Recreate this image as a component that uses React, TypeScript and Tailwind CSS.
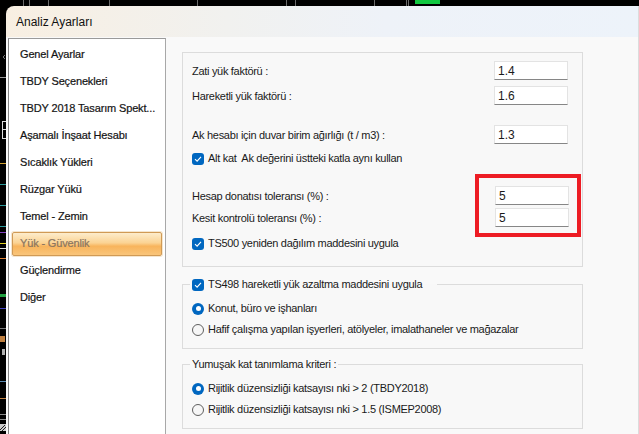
import React from "react";

const FONT = { fontFamily: '"Liberation Sans", Arial, sans-serif' };

function CheckBox() {
  return (
    <span className="w-[12px] h-[12px] rounded-[3px] bg-[#0067c0] flex items-center justify-center shrink-0">
      <svg width="8" height="8" viewBox="0 0 8 8">
        <path d="M1 4.2 L3.1 6.2 L7 1.8" fill="none" stroke="#ffffff" strokeWidth="1.1" />
      </svg>
    </span>
  );
}

function Radio({ checked }: { checked?: boolean }) {
  return checked ? (
    <span className="w-[12px] h-[12px] rounded-full bg-[#0067c0] flex items-center justify-center shrink-0">
      <span className="w-[5px] h-[5px] rounded-full bg-white" />
    </span>
  ) : (
    <span className="w-[12px] h-[12px] rounded-full border border-[#5f5f5f] bg-[#f6f6f6] shrink-0" />
  );
}

function Input({ value, wide }: { value: string; wide?: boolean }) {
  return (
    <div
      className={
        "h-[19px] w-[74px] bg-white border border-[#e3e3e3] border-b-[#868686] flex items-center pl-[3px] text-[12px] tracking-normal text-[#1a1a1a] " +
        (wide ? "mr-[13px]" : "mr-[14px]")
      }
    >
      {value}
    </div>
  );
}

function Row({ label, value, mt, wide }: { label: string; value: string; mt: string; wide?: boolean }) {
  return (
    <div className={"h-[19px] flex items-center justify-between " + mt}>
      <span className="pt-[2px]">{label}</span>
      <Input value={value} wide={wide} />
    </div>
  );
}

const items = [
  "Genel Ayarlar",
  "TBDY Seçenekleri",
  "TBDY 2018 Tasarım Spekt...",
  "Aşamalı İnşaat Hesabı",
  "Sıcaklık Yükleri",
  "Rüzgar Yükü",
  "Temel - Zemin",
  "Yük - Güvenlik",
  "Güçlendirme",
  "Diğer",
];

export default function App() {
  return (
    <div className="w-[639px] h-[434px] bg-black overflow-hidden flex flex-col text-[11px] text-[#1a1a1a]" style={FONT}>
      <svg width="639" height="6" className="block shrink-0">
        <rect width="639" height="6" fill="#000" />
        {[23, 29, 48, 109, 197, 286, 295, 374, 406, 408].map((x) => (
          <line key={x} x1={x + 0.5} y1="0" x2={x + 0.5} y2="6" stroke="#6a6a6a" strokeWidth="1" />
        ))}
        <rect x="415" y="0" width="25" height="4" fill="#12c840" />
      </svg>
      <div className="flex flex-1 min-h-0">
        <svg width="6" height="428" className="block shrink-0">
          <rect width="6" height="428" fill="#000" />
          <path d="M5 49 L3 51 L5 53" stroke="#777" fill="none" />
          <line x1="0" y1="71.5" x2="6" y2="71.5" stroke="#9a9a9a" />
          <rect x="2" y="115" width="4" height="1" fill="#ddd" />
          <rect x="2" y="115" width="1" height="18" fill="#ddd" />
          <rect x="2" y="123" width="4" height="1" fill="#ddd" />
          <rect x="2" y="132" width="4" height="1" fill="#ddd" />
          <line x1="0" y1="157.5" x2="6" y2="157.5" stroke="#d0a030" />
          <line x1="0" y1="178.5" x2="6" y2="178.5" stroke="#2a9a9a" />
          <line x1="0" y1="199.5" x2="6" y2="199.5" stroke="#2a9a9a" />
          <line x1="0" y1="220.5" x2="6" y2="220.5" stroke="#2a9a9a" />
          <line x1="0" y1="226.5" x2="6" y2="226.5" stroke="#8040c0" />
          <line x1="0" y1="237.5" x2="6" y2="237.5" stroke="#e0d020" />
          <line x1="0" y1="242.5" x2="6" y2="242.5" stroke="#e0e0e0" />
          <line x1="0" y1="252.5" x2="6" y2="252.5" stroke="#e08030" />
          <rect x="0" y="288" width="6" height="3" fill="#20a040" />
          <line x1="0" y1="302.5" x2="6" y2="302.5" stroke="#4040c0" />
          <line x1="0" y1="322.5" x2="6" y2="322.5" stroke="#777" />
          <rect x="0" y="330" width="5" height="6" fill="#c08040" />
          <rect x="2" y="343" width="3" height="6" fill="#b0b0b0" />
          <line x1="0" y1="375.5" x2="6" y2="375.5" stroke="#5a8ab0" />
          <line x1="0" y1="392.5" x2="6" y2="392.5" stroke="#c08040" />
          <line x1="0" y1="408.5" x2="6" y2="408.5" stroke="#888" />
          <line x1="0" y1="413.5" x2="6" y2="413.5" stroke="#888" />
          <rect x="0" y="418" width="6" height="7" fill="#ccc" />
          <path d="M0 424 L5 419 M2 425 L6 421" stroke="#222" />
        </svg>

        {/* Window */}
        <div className="flex-1 flex flex-col rounded-tl-[8px] overflow-hidden border-r border-[#dcdcdc]">
          <div className="h-[31px] shrink-0 flex items-center pl-[10px] text-[12px] text-[#111] bg-[linear-gradient(to_right,#f8efe2,#f1f1ef_35%,#eef2f8_60%,#edf3fa)]">
            Analiz Ayarları
          </div>
          <div className="flex-1 flex bg-[#f9f9f9] min-h-0">
            {/* Left list */}
            <div className="ml-[2px] mt-[1px] w-[158px] bg-white border-l border-t border-r border-l-[#858585] border-t-[#9a9a9a] border-r-[#a8a8a8] pt-[2px] px-[3px] tracking-[-0.15px] [-webkit-text-stroke:0.2px]">
              {items.map((t) => {
                const sel = t === "Yük - Güvenlik";
                return (
                  <div key={t} className="h-[27px] flex items-center">
                    <div
                      className={
                        "h-[24px] w-full flex items-center pl-[7px] whitespace-nowrap " +
                        (sel
                          ? "border border-[#d09a55] rounded-[2px] text-[#8a7560] bg-[linear-gradient(to_bottom,#fdeccc,#fbd393_45%,#f8b45c_60%,#f9c57a)] shadow-[0_0_0_1px_#f5e6cf]"
                          : "border border-transparent text-[#141414]")
                      }
                    >
                      {t}
                    </div>
                  </div>
                );
              })}
            </div>

            {/* Right content */}
            <div className="flex-1 pl-[16px] pt-[15px] flex flex-col tracking-[-0.3px]">
              <div className="relative w-[401px] border border-[#dcdcdc] bg-[#f8f8f8] pl-[9px] pt-[8px] pb-[13px] flex flex-col">
                <Row label="Zati yük faktörü :" value="1.4" mt="" />
                <Row label="Hareketli yük faktörü :" value="1.6" mt="mt-[6px]" />
                <Row label="Ak hesabı için duvar birim ağırlığı (t / m3) :" value="1.3" mt="mt-[20px]" />
                <div className="h-[19px] mt-[5px] flex items-center gap-[4px]">
                  <CheckBox />
                  <span>Alt kat&nbsp; Ak değerini üstteki katla aynı kullan</span>
                </div>
                <Row label="Hesap donatısı toleransı (%) :" value="5" mt="mt-[18px]" wide />
                <Row label="Kesit kontrolü toleransı (%) :" value="5" mt="mt-[3px]" wide />
                <div className="h-[19px] mt-[7px] flex items-center gap-[4px]">
                  <CheckBox />
                  <span>TS500 yeniden dağılım maddesini uygula</span>
                </div>
                <div className="absolute left-[292px] top-[121px] w-[106px] h-[63px] border-[4px] border-[#ed1c24]" />
              </div>

              <fieldset className="mt-[8px] w-[401px] border border-[#dcdcdc] bg-[#f8f8f8] pl-[7px] pb-[9px]">
                <legend className="h-[19px] flex items-center gap-[4px] pl-[2px] pr-[15px]">
                  <CheckBox />
                  <span>TS498 hareketli yük azaltma maddesini uygula</span>
                </legend>
                <div className="pl-[2px] flex flex-col">
                  <div className="h-[19px] mt-[5px] flex items-center gap-[4px]">
                    <Radio checked />
                    <span>Konut, büro ve işhanları</span>
                  </div>
                  <div className="h-[19px] mt-[2px] flex items-center gap-[4px]">
                    <Radio />
                    <span>Hafif çalışma yapılan işyerleri, atölyeler, imalathaneler ve mağazalar</span>
                  </div>
                </div>
              </fieldset>

              <fieldset className="mt-[6px] w-[401px] border border-[#dcdcdc] bg-[#f8f8f8] pl-[7px] pb-[9px]">
                <legend className="h-[19px] flex items-center pl-[2px] pr-[2px]">
                  Yumuşak kat tanımlama kriteri :
                </legend>
                <div className="pl-[2px] flex flex-col">
                  <div className="h-[19px] mt-[5px] flex items-center gap-[4px]">
                    <Radio checked />
                    <span>Rijitlik düzensizliği katsayısı nki &gt; 2 (TBDY2018)</span>
                  </div>
                  <div className="h-[19px] mt-[2px] flex items-center gap-[4px]">
                    <Radio />
                    <span>Rijitlik düzensizliği katsayısı nki &gt; 1.5 (ISMEP2008)</span>
                  </div>
                </div>
              </fieldset>
            </div>
          </div>
        </div>
      </div>
    </div>
  );
}
